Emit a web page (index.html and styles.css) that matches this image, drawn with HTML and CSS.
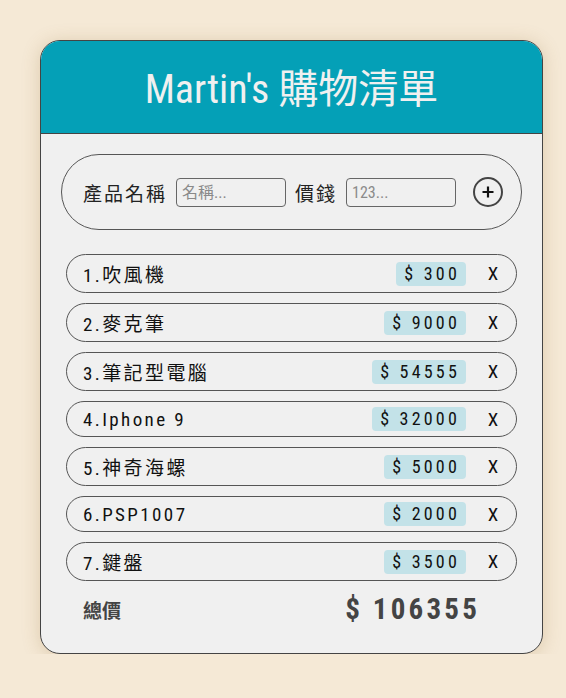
FILE: index.html
```html
<!DOCTYPE html>
<html lang="zh-Hant">
<head>
<meta charset="utf-8">
<title>Martin's 購物清單</title>
<link rel="stylesheet" href="styles.css">
</head>
<body>
<div class="card">
  <header class="card-header">
    <h1 class="title">Martin's 購物清單</h1>
  </header>
  <div class="card-body">
    <form class="add-form">
      <label class="field-label">產品名稱</label>
      <input class="field-input" type="text" placeholder="名稱...">
      <label class="field-label">價錢</label>
      <input class="field-input" type="text" placeholder="123...">
      <button class="add-btn" type="button" aria-label="新增">
        <svg width="14" height="14" viewBox="0 0 14 14"><path d="M7 1.5v11M1.5 7h11" stroke="#111" stroke-width="2.2" fill="none"/></svg>
      </button>
    </form>
    <ul class="item-list">
      <li class="item"><span class="item-name">1.吹風機</span><span class="item-price">$ 300</span><span class="item-remove">X</span></li>
      <li class="item"><span class="item-name">2.麥克筆</span><span class="item-price">$ 9000</span><span class="item-remove">X</span></li>
      <li class="item"><span class="item-name">3.筆記型電腦</span><span class="item-price">$ 54555</span><span class="item-remove">X</span></li>
      <li class="item item--latin"><span class="item-name">4.Iphone 9</span><span class="item-price">$ 32000</span><span class="item-remove">X</span></li>
      <li class="item"><span class="item-name">5.神奇海螺</span><span class="item-price">$ 5000</span><span class="item-remove">X</span></li>
      <li class="item item--latin"><span class="item-name">6.PSP1007</span><span class="item-price">$ 2000</span><span class="item-remove">X</span></li>
      <li class="item"><span class="item-name">7.鍵盤</span><span class="item-price">$ 3500</span><span class="item-remove">X</span></li>
    </ul>
    <div class="total">
      <span class="total-label">總價</span>
      <span class="total-value">$ 106355</span>
    </div>
  </div>
</div>
</body>
</html>
```

FILE: styles.css
```css
* { box-sizing: border-box; }

body {
  margin: 0;
  background: #f5e9d6;
  font-family: "Roboto Condensed", Roboto, "Noto Sans CJK TC", sans-serif;
  color: #111;
}

.card {
  width: 503px;
  margin: 40px 0 0 40px;
  border: 1px solid #444;
  border-radius: 20px;
  overflow: hidden;
  background: #f0f0f0;
  box-shadow: 0 2px 18px rgba(150, 110, 50, 0.25);
}

.card-header {
  height: 93px;
  background: #04a0b7;
  border-bottom: 1px solid #444;
  display: flex;
  align-items: center;
  justify-content: center;
}

.title {
  margin: 0 0 2px 0;
  font-size: 40px;
  font-weight: 400;
  color: #f0f0f0;
  letter-spacing: 0;
}

.card-body {
  padding: 20px 20px 24px 20px;
}

.add-form {
  height: 76px;
  border: 1px solid #555;
  border-radius: 38px;
  display: flex;
  align-items: center;
  padding: 0 14px 0 21px;
  gap: 9px;
}

.field-label {
  flex-shrink: 0;
  white-space: nowrap;
  font-size: 19px;
  letter-spacing: 2px;
  color: #222;
}

.field-input {
  flex-shrink: 0;
  width: 110px;
  height: 29px;
  border: 1px solid #666;
  border-radius: 4px;
  background: #f0f0f0;
  padding: 0 5px;
  font-family: "Roboto Condensed", Roboto, "Noto Sans CJK TC", sans-serif;
  font-size: 16px;
  color: #222;
}

.field-input::placeholder {
  color: #8a8a8a;
}

.add-btn {
  flex-shrink: 0;
  margin-left: 8px;
  width: 30px;
  height: 30px;
  border: 2px solid #444;
  border-radius: 50%;
  background: transparent;
  padding: 0;
  display: flex;
  align-items: center;
  justify-content: center;
}

.item-list {
  list-style: none;
  margin: 24px 5px 0 5px;
  padding: 0;
  display: flex;
  flex-direction: column;
  gap: 10px;
}

.item {
  height: 39px;
  border: 1px solid #555;
  border-radius: 20px;
  display: flex;
  align-items: center;
  padding: 0 17px 0 16px;
}

.item--latin {
  height: 36px;
}

.item-name {
  flex: 1;
  font-size: 19px;
  letter-spacing: 2.4px;
  color: #111;
}

.item-price {
  height: 24px;
  line-height: 24px;
  padding: 0 6px 0 8px;
  border-radius: 4px;
  background: #c3e2e8;
  font-size: 18px;
  letter-spacing: 3.2px;
  color: #111;
}

.item-remove {
  width: 12px;
  margin-left: 21px;
  text-align: center;
  font-size: 19px;
  color: #111;
}

.total {
  margin: 8px 5px 0 5px;
  height: 40px;
  display: flex;
  align-items: center;
  justify-content: space-between;
  padding: 0 37px 0 17px;
}

.total-label {
  font-size: 19px;
  font-weight: 600;
  color: #444;
}

.total-value {
  font-size: 29px;
  font-weight: 700;
  letter-spacing: 3.2px;
  color: #444;
}
```
